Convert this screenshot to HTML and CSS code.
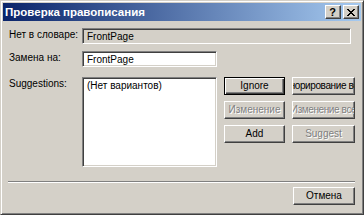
FILE: index.html
```html
<!DOCTYPE html>
<html lang="ru">
<head>
<meta charset="utf-8">
<title>Проверка правописания</title>
<link rel="stylesheet" href="styles.css">
</head>
<body>
<div class="window">
  <div class="titlebar">
    <span class="title">Проверка правописания</span>
    <div class="tb-buttons">
      <div class="tb-btn help">?</div>
      <div class="tb-btn close">
        <svg width="8" height="7" viewBox="0 0 8 7" shape-rendering="crispEdges">
          <path fill="#000" d="M0 0h2v1h-2z M6 0h2v1h-2z M1 1h2v1h-2z M5 1h2v1h-2z M2 2h4v1h-4z M3 3h2v1h-2z M2 4h4v1h-4z M1 5h2v1h-2z M5 5h2v1h-2z M0 6h2v1h-2z M6 6h2v1h-2z"/>
        </svg>
      </div>
    </div>
  </div>
  <div class="content">
    <div class="row r1">
      <div class="lbl">Нет в словаре:</div>
      <div class="field ro">FrontPage</div>
    </div>
    <div class="row r2">
      <div class="lbl">Замена на:</div>
      <div class="field edit">FrontPage</div>
    </div>
    <div class="row r3">
      <div class="lbl">Suggestions:</div>
      <div class="list">(Нет вариантов)</div>
      <div class="btn-grid">
        <div class="btn default"><span>Ignore</span></div>
        <div class="btn wide"><span>Игнорирование всех</span></div>
        <div class="btn disabled"><span>Изменение</span></div>
        <div class="btn disabled wide"><span>Изменение все</span></div>
        <div class="btn"><span>Add</span></div>
        <div class="btn disabled"><span>Suggest</span></div>
      </div>
    </div>
    <div class="sep"></div>
    <div class="footer">
      <div class="btn cancel"><span>Отмена</span></div>
    </div>
  </div>
</div>
</body>
</html>
```

FILE: styles.css
```css
* { box-sizing: border-box; }
html, body { margin: 0; padding: 0; }
body {
  width: 364px;
  height: 215px;
  overflow: hidden;
  background: #d4d0c8;
  font-family: "Liberation Sans", Arial, sans-serif;
  font-size: 10px;
  color: #000;
}
.window {
  width: 364px;
  height: 215px;
  background: #d4d0c8;
  border: 1px solid;
  border-color: #d4d0c8 #404040 #404040 #d4d0c8;
  box-shadow: inset 1px 1px #fff, inset -1px -1px #808080;
  padding: 2px;
  display: flex;
  flex-direction: column;
}
.titlebar {
  height: 18px;
  background: linear-gradient(to right, #0a246a, #a6caf0);
  display: flex;
  align-items: center;
  justify-content: space-between;
  padding: 0 2px 0 2px;
}
.title {
  color: #fff;
  font-weight: bold;
  font-size: 11.5px;
  line-height: 18px;
  white-space: nowrap;
}
.tb-buttons {
  display: flex;
  gap: 2px;
}
.tb-btn {
  width: 16px;
  height: 14px;
  background: #d4d0c8;
  border: 1px solid;
  border-color: #fff #404040 #404040 #fff;
  box-shadow: inset -1px -1px #808080;
  display: flex;
  align-items: center;
  justify-content: center;
  font-weight: bold;
  font-size: 11px;
  line-height: 12px;
}
.tb-btn.help { padding-right: 1px; }
.tb-btn.close svg { display: block; margin-left: -1px; }
.content {
  padding: 7px 6px 0 5px;
  display: flex;
  flex-direction: column;
}
.row {
  display: flex;
  align-items: flex-start;
}
.r2 { margin-top: 7px; }
.r3 { margin-top: 10px; }
.lbl {
  width: 74px;
  flex: none;
  line-height: 13px;
  padding-left: 1px;
  white-space: nowrap;
}
.field {
  height: 16px;
  border: 1px solid;
  border-color: #808080 #fff #fff #808080;
  box-shadow: inset 1px 1px #404040, inset -1px -1px #d4d0c8;
  padding: 0 4px;
  line-height: 15px;
  white-space: nowrap;
}
.field.ro { width: 269px; background: #d4d0c8; }
.field.edit { width: 135px; background: #fff; }
.list {
  width: 135px;
  height: 90px;
  flex: none;
  background: #fff;
  border: 1px solid;
  border-color: #808080 #fff #fff #808080;
  box-shadow: inset 1px 1px #404040, inset -1px -1px #d4d0c8;
  padding: 2px 4px;
  line-height: 12px;
  white-space: nowrap;
}
.btn-grid {
  margin-left: 7px;
  display: grid;
  grid-template-columns: 61px 63px;
  grid-auto-rows: 18px;
  column-gap: 7px;
  row-gap: 6px;
}
.btn {
  height: 18px;
  background: #d4d0c8;
  border: 1px solid;
  border-color: #fff #404040 #404040 #fff;
  box-shadow: inset -1px -1px #808080;
  display: flex;
  align-items: center;
  justify-content: center;
  overflow: hidden;
  white-space: nowrap;
  line-height: 14px;
}
.btn span { flex: none; }
.btn.wide span { letter-spacing: -0.4px; }
.btn.default {
  border: 1px solid #000;
  box-shadow: inset 1px 1px #fff, inset -1px -1px #404040, inset -2px -2px #808080;
}
.btn.disabled {
  color: #808080;
  text-shadow: 1px 1px 0 #fff;
}
.sep {
  width: 347px;
  margin-top: 14px;
  border-top: 1px solid #808080;
  border-bottom: 1px solid #fff;
}
.footer {
  display: flex;
  justify-content: flex-end;
  margin-top: 4px;
}
.btn.cancel { width: 62px; }
```
